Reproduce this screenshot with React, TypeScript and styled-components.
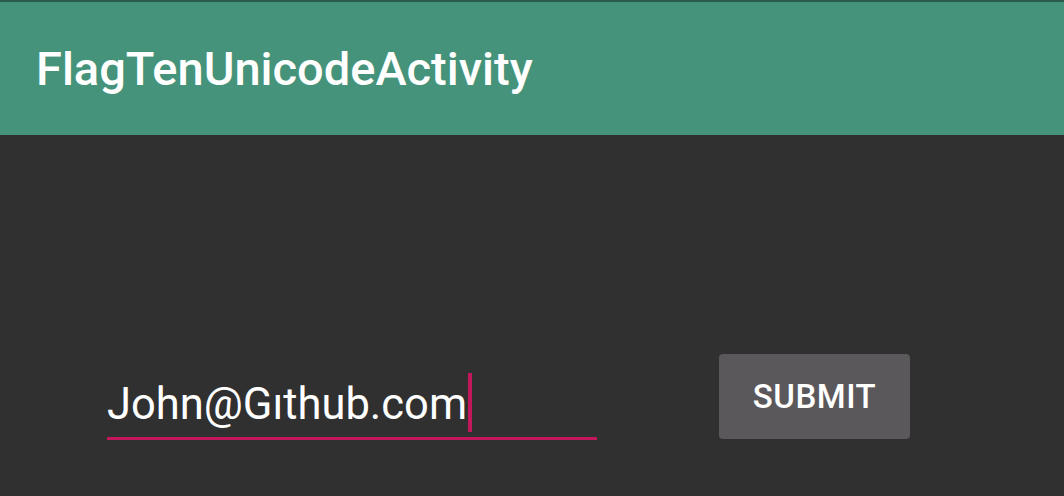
import React from 'react';
import styled, { createGlobalStyle } from 'styled-components';

const GlobalStyle = createGlobalStyle`
	html, body {
		margin: 0;
		padding: 0;
		background: #303030;
		font-family: Roboto, "Noto Sans", sans-serif;
	}
`;

const Screen = styled.div`
	width: 1064px;
	height: 496px;
	display: flex;
	flex-direction: column;
	background: #303030;
	overflow: hidden;
`;

const StatusStrip = styled.div`
	height: 2px;
	background: #2b5c4b;
`;

const AppBar = styled.header`
	height: 133px;
	display: flex;
	align-items: center;
	padding-left: 36px;
	background: #45937a;
	color: #ffffff;
	font-size: 47px;
	font-weight: 500;
	box-sizing: border-box;
`;

const Content = styled.main`
	display: flex;
	align-items: flex-start;
	padding: 219px 0 0 107px;
`;

const Field = styled.label`
	width: 490px;
	height: 86px;
	display: flex;
	align-items: center;
	border-bottom: 3px solid #c2185b;
	box-sizing: border-box;
	padding-top: 18px;
	color: #ffffff;
	font-size: 43.5px;
`;

const Caret = styled.span`
	display: inline-block;
	width: 4px;
	height: 59px;
	margin-left: 1px;
	background: #c2185b;
	align-self: flex-end;
	margin-bottom: 5px;
`;

const SubmitButton = styled.button`
	margin-left: 122px;
	width: 191px;
	height: 85px;
	border: none;
	border-radius: 4px;
	background: #5b585b;
	color: #ffffff;
	font-family: Roboto, "Noto Sans", sans-serif;
	font-size: 33px;
	font-weight: 500;
	letter-spacing: 0.5px;
	text-transform: uppercase;
`;

export default function App() {
	return (
		<Screen>
			<GlobalStyle />
			<StatusStrip />
			<AppBar>FlagTenUnicodeActivity</AppBar>
			<Content>
				<Field>
					John@Gıthub.com
					<Caret />
				</Field>
				<SubmitButton>Submit</SubmitButton>
			</Content>
		</Screen>
	);
}
